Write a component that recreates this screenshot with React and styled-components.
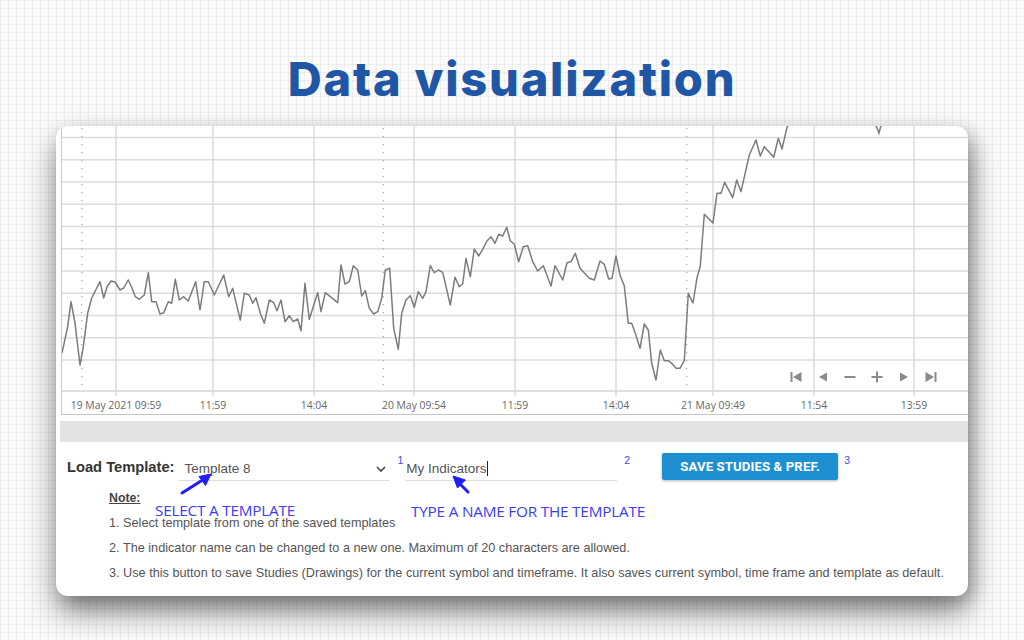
import React from "react";
import styled, { createGlobalStyle } from "styled-components";

const GlobalStyle = createGlobalStyle`
  html, body { margin: 0; padding: 0; }
  body {
    width: 1024px;
    height: 640px;
    overflow: hidden;
    background-color: #fafafa;
    background-image:
      linear-gradient(to right, rgba(0,0,0,0.045) 1px, transparent 1px),
      linear-gradient(to bottom, rgba(0,0,0,0.045) 1px, transparent 1px);
    background-size: 8px 8px;
    font-family: "Liberation Sans", Arial, sans-serif;
  }
`;

const Page = styled.div`
  display: flex;
  flex-direction: column;
  align-items: center;
  width: 1024px;
`;

const Header = styled.header`
  height: 126px;
  display: flex;
  align-items: center;
  justify-content: center;
  padding-top: 30px;
  box-sizing: border-box;
`;

const Title = styled.h1`
  margin: 0;
  font-family: "Inter", "Open Sans", sans-serif;
  font-weight: 800;
  font-size: 47px;
  letter-spacing: 1.8px;
  color: #1f56a5;
  line-height: 1;
`;

const Card = styled.section`
  position: relative;
  width: 912px;
  background: #ffffff;
  border-radius: 12px;
  overflow: hidden;
  padding-bottom: 10px;
  box-shadow: 0 16px 30px rgba(0, 0, 0, 0.45), 6px 6px 18px rgba(0, 0, 0, 0.2);
`;

const ChartArea = styled.div`
  position: relative;
  height: 289px;
  padding-left: 5px;
`;

const ChartFrame = styled.div`
  height: 288px;
  border-left: 1px solid #c9c9c9;
  border-bottom: 1px solid #c4c4c4;
  svg { display: block; }
`;

const NavControls = styled.div`
  position: absolute;
  right: 31px;
  top: 245px;
  display: flex;
  gap: 15px;
  align-items: center;
`;

const NavIcon = styled.svg`
  width: 12px;
  height: 12px;
  fill: #8a8a8a;
`;

const ScrollBar = styled.div`
  margin: 6px 0 0 4px;
  height: 21px;
  background: #e3e3e3;
`;

const ControlsRow = styled.div`
  display: flex;
  align-items: center;
  height: 28px;
  margin-top: 11px;
  padding-left: 11px;
`;

const Label = styled.span`
  font-family: "Liberation Sans", Arial, sans-serif;
  font-weight: 700;
  font-size: 14.7px;
  color: #333;
`;

const Field = styled.div`
  position: relative;
  display: flex;
  align-items: center;
  box-sizing: border-box;
  width: ${(p) => p.$width}px;
  height: 24px;
  margin-left: ${(p) => p.$ml || 0}px;
  margin-top: 4px;
  padding-left: ${(p) => p.$pl || 0}px;
  border-bottom: 1px solid #dedede;
  font-family: "Liberation Sans", Arial, sans-serif;
  font-size: 13.5px;
  color: #555;
`;

const Chevron = styled.svg`
  position: absolute;
  right: 4px;
  top: 8px;
  width: 10px;
  height: 8px;
  fill: none;
  stroke: #444;
  stroke-width: 1.6;
`;

const Caret = styled.span`
  display: inline-block;
  width: 1px;
  height: 15px;
  background: #222;
`;

const Sup = styled.span`
  align-self: flex-start;
  margin-top: 1px;
  margin-left: ${(p) => p.$ml}px;
  font-family: "Liberation Sans", Arial, sans-serif;
  font-size: 10.5px;
  color: #4646f0;
`;

const SaveButton = styled.button`
  margin-left: ${(p) => p.$ml}px;
  width: 176px;
  height: 27px;
  margin-top: -1px;
  border: none;
  border-radius: 2px;
  background: #1e90d2;
  color: #fff;
  font-family: "Roboto", sans-serif;
  font-weight: 700;
  font-size: 13.2px;
  letter-spacing: 0.1px;
  box-shadow: 0 1px 3px rgba(0, 0, 0, 0.3);
  padding: 0;
  cursor: pointer;
`;

const Notes = styled.div`
  margin-top: 5px;
  padding-left: 53px;
  font-family: "Liberation Sans", Arial, sans-serif;
  font-size: 12.7px;
  line-height: 25px;
  color: #555;
`;

const NoteTitle = styled.div`
  font-weight: 700;
  font-size: 12.3px;
  text-decoration: underline;
  color: #444;
`;

const NoteLine = styled.div``;

const Annotation = styled.span`
  position: absolute;
  left: ${(p) => p.$x}px;
  top: ${(p) => p.$y}px;
  font-family: "Open Sans", "Liberation Sans", sans-serif;
  font-size: 15.3px;
  letter-spacing: -0.2px;
  color: #3c3cf2;
  white-space: nowrap;
  line-height: 1;
`;

const ArrowSvg = styled.svg`
  position: absolute;
  left: ${(p) => p.$x}px;
  top: ${(p) => p.$y}px;
  width: 40px;
  height: 30px;
  overflow: visible;
  fill: #1f1ff5;
  stroke: #1f1ff5;
`;

const PRICE = "61,353 66.7,326.7 70,301.7 74,323 79,365 82.3,346.7 86.7,313 90.7,298 99,281.7 102.7,298 106,286.7 110,281 114,282 119,290 122.7,288 127.3,280 131,288 134.3,296.7 138.3,299.3 143.3,295 147.3,272.7 150.7,301.7 155,301.7 159,314 162.7,312.7 167.3,301.7 170.7,303.3 174.3,279.3 178.3,300 182.7,296.7 187.3,301 194.7,281.7 199,310 203.3,281.7 207.3,281.7 213.3,295 222.7,275 227.7,296.7 231.7,288.3 239.3,320 243.3,293.3 248.3,295 251.7,303.3 255,297.7 259.3,313.3 263.3,323.3 268.3,300 272.7,302.7 276,310.7 280,300 284,321.7 288.3,315.7 292.3,321.7 296.7,319 300,330.7 304,283.3 308.3,319.3 316.7,292.7 320,311.7 324.3,292.7 336.7,302.7 340,265 344,284 348.3,281.7 352.3,265.7 356.7,270 360.7,296 364.3,290.7 368.3,308.3 372.7,314 376.7,311.7 380.7,298.3 384.3,270 388.7,268.3 392.7,328.3 397.3,349.3 400.7,313.3 405,300 409.3,295.7 413.3,307.3 417.3,291.7 421.7,298.3 425,291.7 429.3,265.7 433.3,272.7 437.3,270 441.7,272.3 449.3,305 454,277.3 458.3,286.7 461.7,284 465,258.3 469.3,276.7 473.3,249 477.7,256 481.7,249.3 486,241 490,236.7 494,243.3 497.7,234.3 501.7,236 505.7,227.3 509.3,240.7 513.3,244.3 517.7,261.7 522.3,246.7 526.7,245.7 531.7,261.7 536.7,271 542.3,265.7 550,286 554,265.7 561.7,280 566,262.7 570,261.7 574.3,253.3 579,268.3 588.3,278.3 593.3,280 599,261 603.3,264.3 607.7,279 611,278.3 615,256 619,275 623.3,286 627.3,323.3 630.7,323.3 634.3,333.3 639,348.3 643.3,324 647.3,330 650.7,363.3 655,380 659.3,350 663.3,360.7 667.3,360.7 670.7,363.3 675,368.3 679,368.3 683.3,360.7 687.3,293.3 692,303 696,278 699.3,266 703.3,214.3 712,223 716,193.3 720,193.3 723.7,182.3 731.7,197.7 735.7,180 740,191.7 748.3,155 755,140 759.3,156 763.3,146.7 772.7,157.3 777.3,138.3 781,149 786,127.3 789,122";

const H_LINES = Array.from({ length: 11 }, (_, i) => 137.5 + i * 22.25);
const TICKS = [
  { x: 115, label: "19 May 2021 09:59" },
  { x: 212, label: "11:59" },
  { x: 313, label: "14:04" },
  { x: 413, label: "20 May 09:54" },
  { x: 514, label: "11:59" },
  { x: 615, label: "14:04" },
  { x: 712, label: "21 May 09:49" },
  { x: 813, label: "11:54" },
  { x: 913, label: "13:59" },
];
const DAY_LINES = [80.7, 382.3, 685.7];

function PriceChart() {
  return (
    <svg width="907" height="288" viewBox="61 126 907 288">
      {H_LINES.map((y) => (
        <line key={y} x1="61" x2="968" y1={y} y2={y} stroke="#dcdcdc" strokeWidth="1.3" />
      ))}
      <line x1="61" x2="968" y1="391" y2="391" stroke="#d4d4d4" strokeWidth="1.3" />
      {TICKS.map((t) => (
        <line key={t.x + t.label} x1={t.x} x2={t.x} y1="126" y2="396" stroke="#d6d6d6" strokeWidth="1.3" />
      ))}
      {DAY_LINES.map((x) => (
        <line key={x} x1={x} x2={x} y1="128" y2="391" stroke="#a8a8a8" strokeWidth="1.2" strokeDasharray="1.2 6.8" />
      ))}
      {TICKS.map((t) => (
        <text
          key={"l" + t.x}
          x={t.x}
          y="408.5"
          textAnchor="middle"
          fontFamily="'Open Sans', sans-serif"
          fontSize="10.4"
          fill="#666"
        >
          {t.label}
        </text>
      ))}
      <polyline points={PRICE} fill="none" stroke="#7c7c7c" strokeWidth="1.5" strokeLinejoin="round" />
      <polyline points="872,118 878,133 882,118" fill="none" stroke="#7c7c7c" strokeWidth="1.5" />
    </svg>
  );
}

function Nav() {
  return (
    <NavControls>
      <NavIcon viewBox="0 0 12 12">
        <rect x="0.5" y="1" width="2" height="10" />
        <polygon points="11.5,1 11.5,11 3,6" />
      </NavIcon>
      <NavIcon viewBox="0 0 12 12">
        <polygon points="10,1.5 10,10.5 2,6" />
      </NavIcon>
      <NavIcon viewBox="0 0 12 12">
        <rect x="0.5" y="5" width="11" height="2" />
      </NavIcon>
      <NavIcon viewBox="0 0 12 12">
        <rect x="0.5" y="5" width="11" height="2" />
        <rect x="5" y="0.5" width="2" height="11" />
      </NavIcon>
      <NavIcon viewBox="0 0 12 12">
        <polygon points="2,1.5 2,10.5 10,6" />
      </NavIcon>
      <NavIcon viewBox="0 0 12 12">
        <polygon points="0.5,1 0.5,11 9,6" />
        <rect x="9.5" y="1" width="2" height="10" />
      </NavIcon>
    </NavControls>
  );
}

export default function App() {
  return (
    <>
      <GlobalStyle />
      <Page>
        <Header>
          <Title>Data visualization</Title>
        </Header>
        <Card>
          <ChartArea>
            <ChartFrame>
              <PriceChart />
            </ChartFrame>
            <Nav />
          </ChartArea>
          <ScrollBar />
          <ControlsRow>
            <Label>Load Template:</Label>
            <Field $width={211} $ml={5} $pl={5}>
              Template 8
              <Chevron viewBox="0 0 10 8">
                <polyline points="1,2 5,6 9,2" />
              </Chevron>
            </Field>
            <Sup $ml={7}>1</Sup>
            <Field $width={212} $ml={2} $pl={1}>
              My Indicators
              <Caret />
            </Field>
            <Sup $ml={7}>2</Sup>
            <SaveButton $ml={32}>SAVE STUDIES &amp; PREF.</SaveButton>
            <Sup $ml={6}>3</Sup>
          </ControlsRow>
          <Notes>
            <NoteTitle>Note:</NoteTitle>
            <NoteLine>1. Select template from one of the saved templates</NoteLine>
            <NoteLine>2. The indicator name can be changed to a new one. Maximum of 20 characters are allowed.</NoteLine>
            <NoteLine>
              3. Use this button to save Studies (Drawings) for the current symbol and timeframe. It also saves current
              symbol, time frame and template as default.
            </NoteLine>
          </Notes>
          <Annotation $x={99} $y={377}>SELECT A TEMPLATE</Annotation>
          <Annotation $x={355} $y={378}>TYPE A NAME FOR THE TEMPLATE</Annotation>
          <ArrowSvg $x={120} $y={346} viewBox="0 0 40 30">
            <line x1="6" y1="21" x2="25" y2="9" strokeWidth="3" strokeLinecap="round" />
            <polygon points="35,2 29.5,13.5 23,4.5" />
          </ArrowSvg>
          <ArrowSvg $x={390} $y={346} viewBox="0 0 40 30">
            <line x1="22" y1="20" x2="14" y2="12" strokeWidth="3" strokeLinecap="round" />
            <polygon points="7,4 19.5,8 11.5,16" />
          </ArrowSvg>
        </Card>
      </Page>
    </>
  );
}
